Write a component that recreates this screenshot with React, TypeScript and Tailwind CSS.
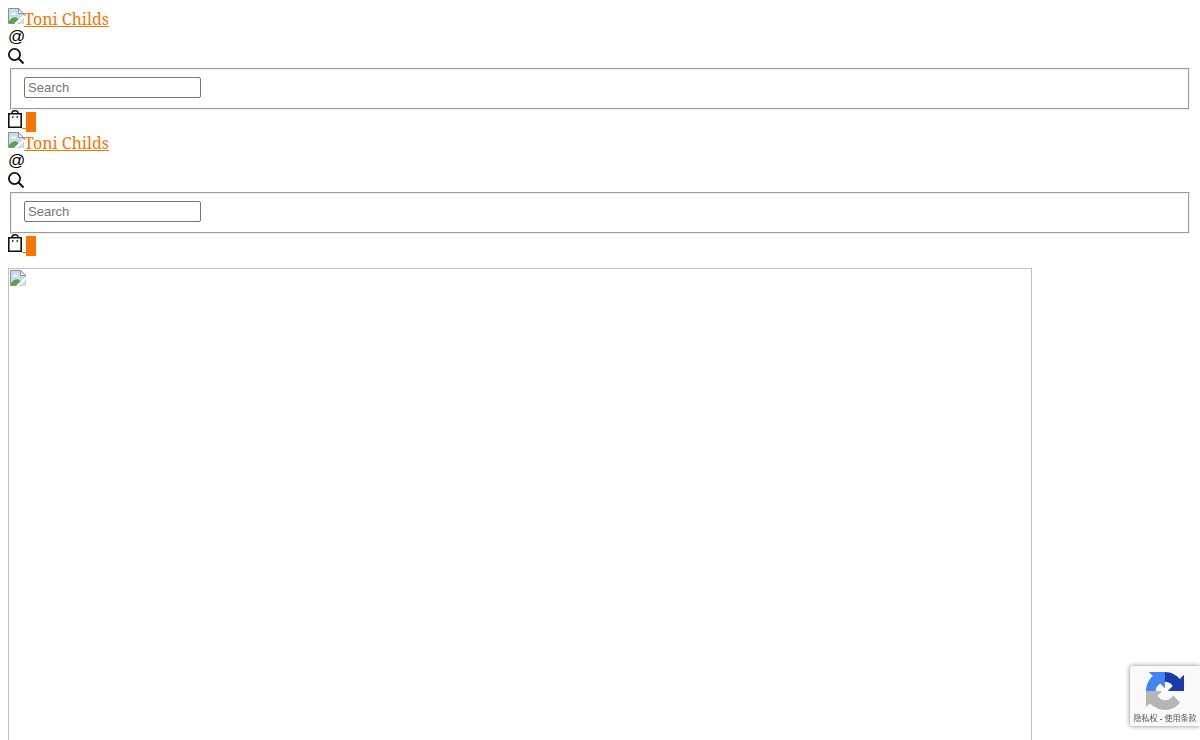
import React from 'react';

function BrokenImage() {
  return (
    <svg viewBox="0 0 16 16" className="block w-4 h-4 shrink-0" aria-hidden="true">
      <path d="M.5 .5h10.2l4.8 4.8v10.2H.5z" fill="#c8daf4" />
      <path d="M1 13.2C3.2 10 6.4 8.6 8.8 9.8L10.5 11.6 6.5 15H1z" fill="#5aa53c" />
      <path d="M3 6.4c0-1 .7-1.6 1.5-1.6.4-.9 2-.9 2.4.1.9 0 1.2.6 1.2 1.5z" fill="#fff" />
      <path d="M.5 15.5V.5h10.2l4.8 4.8v10.2z" fill="none" stroke="#8d9196" />
      <path d="M10.5.8v4.7h4.8z" fill="#fff" stroke="#8d9196" />
      <path d="M16 6.6 6.2 16h3.3L16 10.2z" fill="#fff" />
      <path d="M16 11v5h-5.5z" fill="#c8daf4" />
    </svg>
  );
}

function SearchIcon() {
  return (
    <svg viewBox="0 0 16 16" className="block w-4 h-4" fill="none" stroke="#111" strokeWidth="1.8" aria-hidden="true">
      <circle cx="6.5" cy="6.5" r="5.6" />
      <path d="m10.5 10.5 5 5" strokeWidth="2" />
    </svg>
  );
}

function BagIcon() {
  return (
    <svg viewBox="0 0 14 18" className="block w-3.5 h-[18px]" fill="none" stroke="#111" aria-hidden="true">
      <path d="M.8 3.8h12.4v13.4H.8z" strokeWidth="1.6" />
      <path d="M4 3.8V3q0-2.2 3-2.2T10 3v.8" strokeWidth="1.5" />
      <path d="M4 7h1.5M8.5 7H10" strokeWidth="1.5" />
    </svg>
  );
}

function RecaptchaLogo() {
  return (
    <svg viewBox="0 0 64 64" className="block w-[38px] h-[38px]" aria-hidden="true">
      <path fill="#1c3aa9" d="M64 31.955l-.033-1.37V4.687l-7.16 7.16C50.948 4.674 42.033.093 32.05.093c-10.4 0-19.622 4.96-25.458 12.64l11.736 11.86a15.55 15.55 0 0 1 4.754-5.334c2.05-1.6 4.952-2.906 8.968-2.906.485 0 .86.057 1.135.163 4.976.393 9.288 3.14 11.828 7.124l-8.307 8.307L64 31.953" />
      <path fill="#4285f4" d="M31.862.094l-1.37.033H4.594l7.16 7.16C4.58 13.147 0 22.06 0 32.046c0 10.4 4.96 19.622 12.64 25.458L24.5 45.768a15.55 15.55 0 0 1-5.334-4.754c-1.6-2.05-2.906-4.952-2.906-8.968 0-.485.057-.86.163-1.135.393-4.976 3.14-9.288 7.124-11.828l8.307 8.307L31.86.095" />
      <path fill="#b5b5b5" d="M.001 32.045l.033 1.37v25.898l7.16-7.16c5.86 7.173 14.774 11.754 24.76 11.754 10.4 0 19.622-4.96 25.458-12.64l-11.736-11.86a15.55 15.55 0 0 1-4.754 5.334c-2.05 1.6-4.952 2.906-8.968 2.906-.485 0-.86-.057-1.135-.163-4.976-.393-9.288-3.14-11.828-7.124l8.307-8.307L0 32.047" />
    </svg>
  );
}

function Header() {
  return (
    <header>
      <a href="#home" className="flex h-5 text-base leading-[22px] text-[#f57600] underline">
        <BrokenImage />
        Toni Childs
      </a>
      <a href="#contact" className="block h-5 font-['Liberation_Sans'] text-[17px] leading-[18px] text-black">
        @
      </a>
      <button type="button" aria-label="Open search" className="flex h-5 w-4 items-start">
        <SearchIcon />
      </button>
      <form>
        <fieldset className="mx-0.5 h-[42px] border-2 border-[#f0f0f0] px-3 pt-[7px] [border-style:groove]">
          <input
            type="text"
            aria-label="Search"
            placeholder="Search"
            className="block h-[21px] w-[177px] rounded-xs border border-[#767676] bg-white px-[3px] font-['Liberation_Sans'] text-[13px] leading-4 placeholder:text-[#757575]"
          />
        </fieldset>
      </form>
      <a href="#cart" aria-label="Cart" className="flex h-[22px]">
        <BagIcon />
        <span className="mt-1 h-[15px] w-1 border-b border-[#f57600]" />
        <span className="mt-0.5 h-5 w-2.5 bg-[#f57600]" />
      </a>
    </header>
  );
}

export default function App() {
  return (
    <div className="h-screen overflow-hidden bg-white p-2 font-['Noto_Serif','Liberation_Serif',serif]">
      <Header />
      <Header />
      <main className="mt-3">
        <div className="aspect-video w-full max-w-5xl border border-[#c0c0c0] p-px">
          <BrokenImage />
        </div>
      </main>
      <aside className="fixed right-0 bottom-3.5 flex h-[60px] w-[70px] flex-col items-center rounded-l-xs bg-[#f9f9f9] pt-1.5 shadow-[0_0_5px_#808080]">
        <RecaptchaLogo />
        <p className="mt-[3px] whitespace-nowrap font-['Liberation_Sans','Noto_Sans_CJK_SC',sans-serif] text-[8px] leading-3 text-[#555]">
          <a href="#privacy">隐私权</a> <span className="font-bold">-</span> <a href="#terms">使用条款</a>
        </p>
      </aside>
    </div>
  );
}
